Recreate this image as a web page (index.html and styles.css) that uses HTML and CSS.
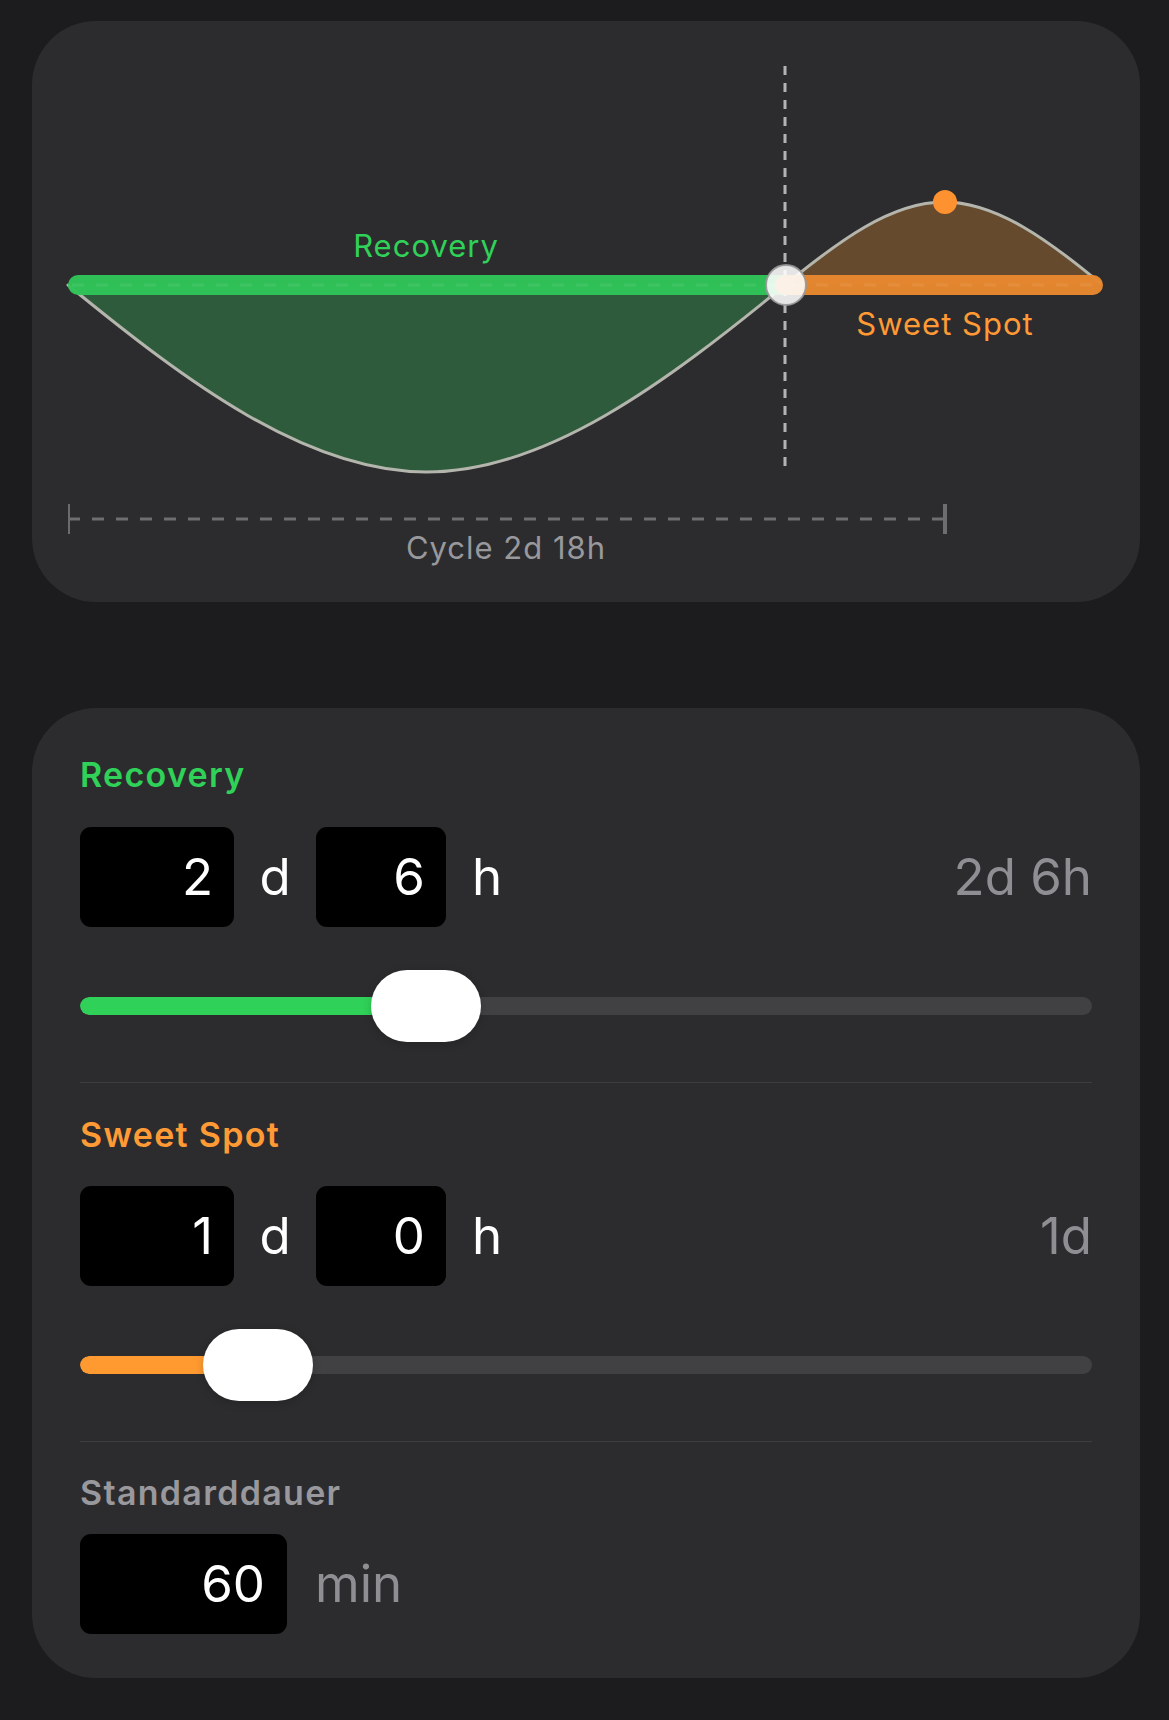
FILE: index.html
```html
<!DOCTYPE html>
<html lang="de">
<head>
<meta charset="utf-8">
<title>Zyklus</title>
<link rel="stylesheet" href="styles.css">
</head>
<body>
<main class="page">
  <section class="card chart-card">
    <svg class="chart" width="1108" height="581" viewBox="32 21 1108 581" xmlns="http://www.w3.org/2000/svg">
      <!-- fills -->
      <path class="fill-green" d="M68 285 C187.5 382.9 307 472 426.5 472 C546 472 665.5 382.9 785 285 Z"/>
      <path class="fill-orange" d="M785 285 C838 241.5 891 202 944 202 C997 202 1050 241.5 1103 285 Z"/>
      <!-- curves -->
      <path class="curve" d="M68 285 C187.5 382.9 307 472 426.5 472 C546 472 665.5 382.9 785 285 C838 241.5 891 202 944 202 C997 202 1050 241.5 1100 283"/>
      <!-- vertical marker -->
      <line class="marker" x1="785" y1="66" x2="785" y2="466"/>
      <!-- base lines -->
      <line class="line-green" x1="78" y1="285" x2="785" y2="285"/>
      <line class="line-orange" x1="785" y1="285" x2="1093" y2="285"/>
      <line class="line-dash" x1="72" y1="285" x2="1100" y2="285"/>
      <!-- handle -->
      <circle class="handle" cx="786" cy="285" r="20"/>
      <circle class="peak" cx="945" cy="202" r="12"/>
      <!-- labels -->
      <text class="label label-green" x="426" y="257">Recovery</text>
      <text class="label label-orange" x="945" y="335">Sweet Spot</text>
      <!-- cycle bracket -->
      <line class="bracket-dash" x1="68" y1="519" x2="944" y2="519"/>
      <line class="tick-left" x1="69" y1="504" x2="69" y2="534"/>
      <line class="tick-right" x1="945" y1="504" x2="945" y2="534"/>
      <text class="label label-gray" x="506" y="559">Cycle 2d 18h</text>
    </svg>
  </section>

  <section class="card settings-card">
    <div class="group">
      <h2 class="heading heading-green">Recovery</h2>
      <div class="value-row">
        <div class="num-box">2</div>
        <span class="unit">d</span>
        <div class="num-box num-box-small">6</div>
        <span class="unit">h</span>
        <span class="summary">2d 6h</span>
      </div>
      <div class="slider">
        <div class="track"><div class="fill fill-green-bar" style="width: 346px"></div></div>
        <div class="thumb" style="left: 291px"></div>
      </div>
    </div>

    <div class="group group-divided">
      <h2 class="heading heading-orange">Sweet Spot</h2>
      <div class="value-row">
        <div class="num-box">1</div>
        <span class="unit">d</span>
        <div class="num-box num-box-small">0</div>
        <span class="unit">h</span>
        <span class="summary">1d</span>
      </div>
      <div class="slider">
        <div class="track"><div class="fill fill-orange-bar" style="width: 178px"></div></div>
        <div class="thumb" style="left: 123px"></div>
      </div>
    </div>

    <div class="group group-divided group-last">
      <h2 class="heading heading-gray">Standarddauer</h2>
      <div class="value-row value-row-tight">
        <div class="num-box num-box-wide">60</div>
        <span class="unit-muted">min</span>
      </div>
    </div>
  </section>
</main>
</body>
</html>
```

FILE: styles.css
```css
* { box-sizing: border-box; }

html, body {
  margin: 0;
  padding: 0;
  background: #1c1c1e;
}

body {
  font-family: "Inter", "Roboto", "Liberation Sans", sans-serif;
  color: #ffffff;
  width: 1169px;
  min-height: 1720px;
}

.page {
  display: flex;
  flex-direction: column;
  gap: 106px;
  padding: 21px 29px 42px 32px;
}

.card {
  background: #2c2c2e;
  border-radius: 64px;
  width: 1108px;
}

.chart-card {
  height: 581px;
  overflow: hidden;
}

.chart {
  display: block;
}

.fill-green { fill: #2e5b3b; }
.fill-orange { fill: #664a2e; }

.curve {
  fill: none;
  stroke: #b4b5ad;
  stroke-width: 3;
  stroke-linecap: round;
}

.marker {
  stroke: #b3b3b5;
  stroke-width: 3;
  stroke-dasharray: 9 8;
}

.line-green {
  stroke: #31c459;
  stroke-width: 20;
  stroke-linecap: round;
  opacity: 0.97;
}

.line-orange {
  stroke: #e88830;
  stroke-width: 20;
  stroke-linecap: round;
  opacity: 0.97;
}

.line-dash {
  stroke: rgba(255, 255, 255, 0.07);
  stroke-width: 3;
  stroke-dasharray: 12 12;
}

.handle {
  fill: rgba(255, 255, 255, 0.88);
  stroke: rgba(150, 150, 152, 0.9);
  stroke-width: 2;
}

.peak { fill: #ff9230; }

.label {
  font-family: "Inter", "Roboto", "Liberation Sans", sans-serif;
  font-size: 31px;
  letter-spacing: 1px;
  text-anchor: middle;
}

.label-green { fill: #30d158; }
.label-orange { fill: #ff9a35; }
.label-gray { fill: #98989d; }

.bracket-dash {
  stroke: #6e6e71;
  stroke-width: 3;
  stroke-dasharray: 12 12;
}

.tick-left {
  stroke: #6b6b6e;
  stroke-width: 2;
}

.tick-right {
  stroke: #6e6e71;
  stroke-width: 4;
}

.settings-card {
  height: 970px;
  padding: 47px 48px 44px 48px;
  display: flex;
  flex-direction: column;
}

.group {
  display: flex;
  flex-direction: column;
}

.group-divided {
  border-top: 1px solid #3e3e41;
  margin-top: 40px;
  padding-top: 32px;
}

.group-last {
  padding-top: 31px;
}

.heading {
  margin: 0;
  font-size: 34px;
  line-height: 40px;
  font-weight: 600;
  letter-spacing: 1.3px;
}

.heading-green { color: #30d158; }
.heading-orange { color: #ff9a35; }
.heading-gray { color: #98989d; }

.value-row {
  display: flex;
  align-items: center;
  height: 100px;
  margin-top: 32px;
}

.group-divided .value-row { margin-top: 31px; }
.group-last .value-row { margin-top: 21px; }

.num-box {
  width: 154px;
  height: 100px;
  background: #000000;
  border-radius: 11px;
  text-align: right;
  padding-right: 21px;
  font-size: 51px;
  line-height: 100px;
  color: #ffffff;
}

.num-box-small { width: 130px; }
.num-box-wide { width: 207px; padding-right: 22px; }

.unit {
  width: 82px;
  text-align: center;
  font-size: 51px;
  line-height: 100px;
  color: #ffffff;
}

.unit-muted {
  margin-left: 28px;
  font-size: 51px;
  line-height: 100px;
  color: #8e8e93;
}

.summary {
  margin-left: auto;
  font-size: 51px;
  line-height: 100px;
  color: #8e8e93;
}

.slider {
  position: relative;
  height: 72px;
  margin-top: 43px;
}

.track {
  margin-top: 27px;
  height: 18px;
  border-radius: 9px;
  background: #414144;
  overflow: hidden;
}

.fill {
  height: 100%;
  border-radius: 9px 0 0 9px;
}

.fill-green-bar { background: #30d158; }
.fill-orange-bar { background: #ff9a30; }

.thumb {
  position: absolute;
  top: 0;
  width: 110px;
  height: 72px;
  border-radius: 36px;
  background: #ffffff;
  box-shadow: 0 2px 8px rgba(0, 0, 0, 0.18);
}
```
